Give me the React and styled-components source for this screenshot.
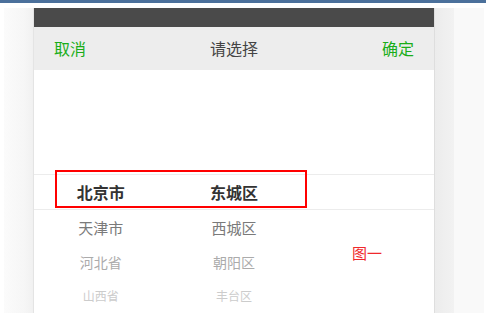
import React from "react";
import styled, { createGlobalStyle } from "styled-components";

const GlobalStyle = createGlobalStyle`
  html, body { margin: 0; padding: 0; background: #ffffff; }
  body { font-family: "Noto Sans CJK SC", "Noto Sans", sans-serif; overflow: hidden; }
  * { box-sizing: border-box; }
`;

const TopBar = styled.div`
  height: 3px;
  background: #4b709b;
`;

const Stage = styled.div`
  margin: 5px 0 0 4px;
  width: 480px;
  height: 305px;
  display: flex;
  overflow: hidden;
`;

const LeftGutter = styled.div`
  width: 29px;
  background: linear-gradient(to right, #fbfbfb 0%, #f6f6f6 70%, #f1f1f1 100%);
`;

const RightShade = styled.div`
  width: 19px;
  background: linear-gradient(to right, #ececec 0%, #f2f2f2 100%);
`;

const RightPad = styled.div`
  width: 30px;
  background: #f9f9f9;
`;

const Panel = styled.div`
  width: 402px;
  background: #ffffff;
  border-left: 1px solid #e4e4e4;
  border-right: 1px solid #dedede;
  display: flex;
  flex-direction: column;
`;

const StatusBar = styled.div`
  height: 19px;
  background: #4a4a4a;
`;

const Header = styled.div`
  height: 44px;
  background: #ededed;
  display: flex;
  align-items: center;
  justify-content: space-between;
  padding: 0 20px;
  font-size: 16px;
`;

const Action = styled.span`
  color: #1aad19;
  width: 48px;
  text-align: ${(p) => p.$align};
`;

const Title = styled.span`
  color: #444;
`;

const Picker = styled.div`
  position: relative;
  flex: 1;
`;

const Spacer = styled.div`
  height: 104px;
`;

const Row = styled.div`
  display: grid;
  grid-template-columns: repeat(3, 1fr);
  align-items: center;
  height: ${(p) => p.$h}px;
  border-top: ${(p) => (p.$selected ? "1px solid #ececec" : "none")};
  border-bottom: ${(p) => (p.$selected ? "1px solid #ececec" : "none")};
  box-sizing: content-box;
`;

const Cell = styled.div`
  text-align: center;
  font-size: ${(p) => p.$size}px;
  color: ${(p) => p.$color};
  font-weight: ${(p) => (p.$bold ? 700 : 400)};
  line-height: 1;
`;

const Highlight = styled.div`
  position: absolute;
  left: 21px;
  top: 100px;
  width: 252px;
  height: 38px;
  border: 2px solid #ff0000;
`;

const Caption = styled.div`
  position: absolute;
  left: 318px;
  top: 174px;
  font-size: 15px;
  line-height: 17px;
  color: #f0292c;
`;

const rows = [
  { a: "天津市", b: "西城区", size: 15, color: "#7a7a7a", h: 35 },
  { a: "河北省", b: "朝阳区", size: 14, color: "#ababab", h: 34 },
  { a: "山西省", b: "丰台区", size: 12, color: "#cccccc", h: 34 },
];

export default function App() {
  return (
    <>
      <GlobalStyle />
      <TopBar />
      <Stage>
        <LeftGutter />
        <Panel>
          <StatusBar />
          <Header>
            <Action $align="left">取消</Action>
            <Title>请选择</Title>
            <Action $align="right">确定</Action>
          </Header>
          <Picker>
            <Spacer />
            <Row $selected $h={34}>
              <Cell $size={16} $color="#333" $bold>北京市</Cell>
              <Cell $size={16} $color="#333" $bold>东城区</Cell>
              <Cell />
            </Row>
            {rows.map((r) => (
              <Row key={r.a} $h={r.h}>
                <Cell $size={r.size} $color={r.color}>{r.a}</Cell>
                <Cell $size={r.size} $color={r.color}>{r.b}</Cell>
                <Cell />
              </Row>
            ))}
            <Highlight />
            <Caption>图一</Caption>
          </Picker>
        </Panel>
        <RightShade />
        <RightPad />
      </Stage>
    </>
  );
}
